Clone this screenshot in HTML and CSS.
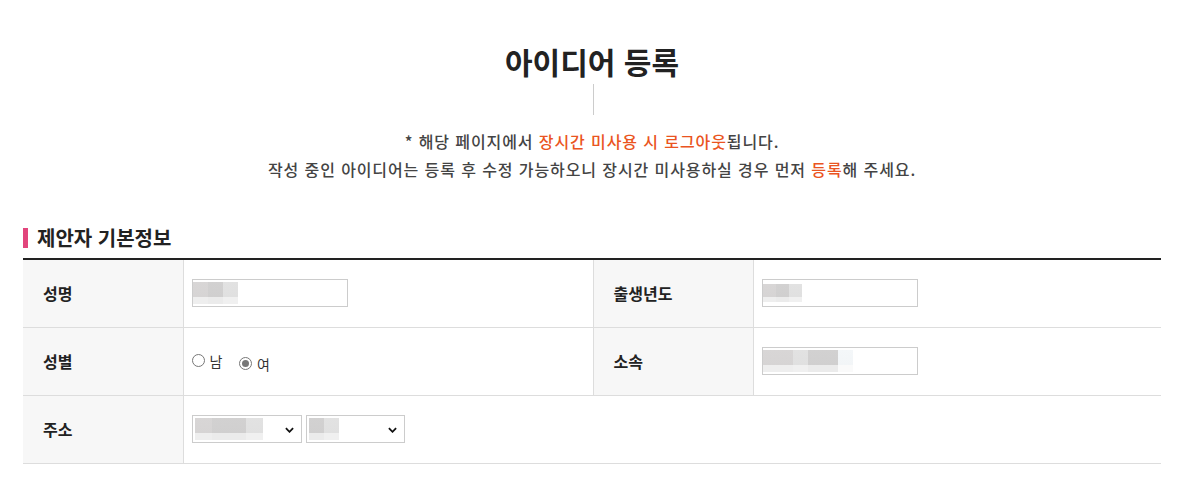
FILE: index.html
```html
<!DOCTYPE html>
<html lang="ko">
<head>
<meta charset="utf-8">
<title>아이디어 등록</title>
<link rel="stylesheet" href="styles.css">
</head>
<body>
<div class="page">
  <h1 class="title">아이디어 등록</h1>
  <div class="divider"></div>
  <p class="notice">* 해당 페이지에서 <em>장시간 미사용 시 로그아웃</em>됩니다.<br>작성 중인 아이디어는 등록 후 수정 가능하오니 장시간 미사용하실 경우 먼저 <em>등록</em>해 주세요.</p>

  <h2 class="section-title">제안자 기본정보</h2>
  <table class="form-table">
    <colgroup>
      <col class="c-label"><col class="c-value"><col class="c-label"><col>
    </colgroup>
    <tr>
      <th>성명</th>
      <td><div class="field"><span class="blur b1"></span><span class="blur b2"></span><span class="blur b3"></span></div></td>
      <th class="th2">출생년도</th>
      <td><div class="field"><span class="blur b1 s"></span><span class="blur b2 s"></span><span class="blur b3 s"></span></div></td>
    </tr>
    <tr>
      <th>성별</th>
      <td>
        <label class="radio"><span class="dot"></span>남</label>
        <label class="radio"><span class="dot on"></span>여</label>
      </td>
      <th class="th2">소속</th>
      <td><div class="field"><span class="blur b1"></span><span class="blur b1"></span><span class="blur b3"></span><span class="blur b2"></span><span class="blur b2"></span><span class="blur b4"></span></div></td>
    </tr>
    <tr>
      <th>주소</th>
      <td colspan="3">
        <div class="selects">
          <div class="select w1"><span class="blur b1 w"></span><span class="blur b2 w"></span><span class="blur b2 w"></span><span class="blur b3 w"></span><svg class="chev" viewBox="0 0 10 6"><path d="M1 1l4 4 4-4" fill="none" stroke="#111" stroke-width="2"/></svg></div>
          <div class="select w2"><span class="blur b2"></span><span class="blur b3"></span><svg class="chev" viewBox="0 0 10 6"><path d="M1 1l4 4 4-4" fill="none" stroke="#111" stroke-width="2"/></svg></div>
        </div>
      </td>
    </tr>
  </table>
</div>
</body>
</html>
```

FILE: styles.css
```css
* { box-sizing: border-box; }
body {
  margin: 0;
  background: #fff;
  font-family: "Noto Sans CJK KR", "Noto Sans", sans-serif;
  color: #222;
}
.page {
  width: 1138px;
  margin-left: 23px;
  padding-top: 38px;
}
.title {
  margin: 0;
  text-align: center;
  font-size: 30px;
  line-height: 46px;
  font-weight: 700;
  color: #222;
}
.divider {
  width: 1px;
  height: 31px;
  background: #ccc;
  margin: 0 auto;
  position: relative;
  left: 1px;
}
.notice {
  margin: 12px 0 0;
  text-align: center;
  font-size: 16px;
  letter-spacing: 0.9px;
  line-height: 28px;
  color: #444;
  font-weight: 500;
}
.notice em {
  font-style: normal;
  color: #ea5421;
}
.section-title {
  margin: 45px 0 0;
  font-size: 20px;
  line-height: 24px;
  font-weight: 700;
  color: #222;
  padding-left: 9px;
  border-left: 5px solid #e2457c;
  height: 20px;
  display: flex;
  align-items: center;
}
.form-table {
  width: 100%;
  margin-top: 10px;
  border-collapse: collapse;
  border-top: 2px solid #222;
  table-layout: fixed;
}
.c-label { width: 160px; }
.c-value { width: 410px; }
.form-table th, .form-table td {
  height: 68px;
  border-bottom: 1px solid #ddd;
  padding: 0 10px 0 8px;
  vertical-align: middle;
}
.form-table th {
  background: #f7f7f7;
  text-align: left;
  padding-left: 20px;
  font-size: 16px;
  font-weight: 700;
  color: #222;
  border-right: 1px solid #ddd;
}
.form-table th.th2 { border-left: 1px solid #ddd; }
.field {
  width: 156px;
  height: 28px;
  border: 1px solid #ccc;
  display: flex;
  align-items: center;
  padding: 0;
}
.blur {
  display: inline-block;
  width: 15px;
  height: 22px;
  background: linear-gradient(#d8d6d6 0, #d6d4d4 70%, #eeeeee 70%);
}
.blur.b2 { background: linear-gradient(#d2d1d1 0, #d0cfcf 70%, #ebebeb 70%); }
.blur.b3 { background: linear-gradient(#e2e2e2 0, #e0e0e0 70%, #f0f0f0 70%); }
.blur.b4 { background: linear-gradient(#f4f7f9 0, #f2f5f7 70%, #fafafa 70%); }
.blur.s { width: 13px; height: 18px; }
.blur.w { width: 17px; }
.radio {
  display: inline-flex;
  align-items: center;
  font-size: 14px;
  color: #333;
  margin-right: 12px;
}
.dot {
  width: 13px;
  height: 13px;
  border: 1px solid #777;
  border-radius: 50%;
  margin-right: 5px;
  display: inline-flex;
  align-items: center;
  justify-content: center;
  background: #fff;
}
.dot.on::after {
  content: "";
  width: 7px;
  height: 7px;
  border-radius: 50%;
  background: #777;
}
.selects { display: flex; gap: 4px; }
.select {
  height: 28px;
  border: 1px solid #ccc;
  display: flex;
  align-items: center;
  padding: 0 2px;
  position: relative;
}
.select.w1 { width: 110px; }
.select.w2 { width: 99px; }
.chev {
  position: absolute;
  right: 7px;
  top: 11px;
  width: 9px;
  height: 6px;
}
```
